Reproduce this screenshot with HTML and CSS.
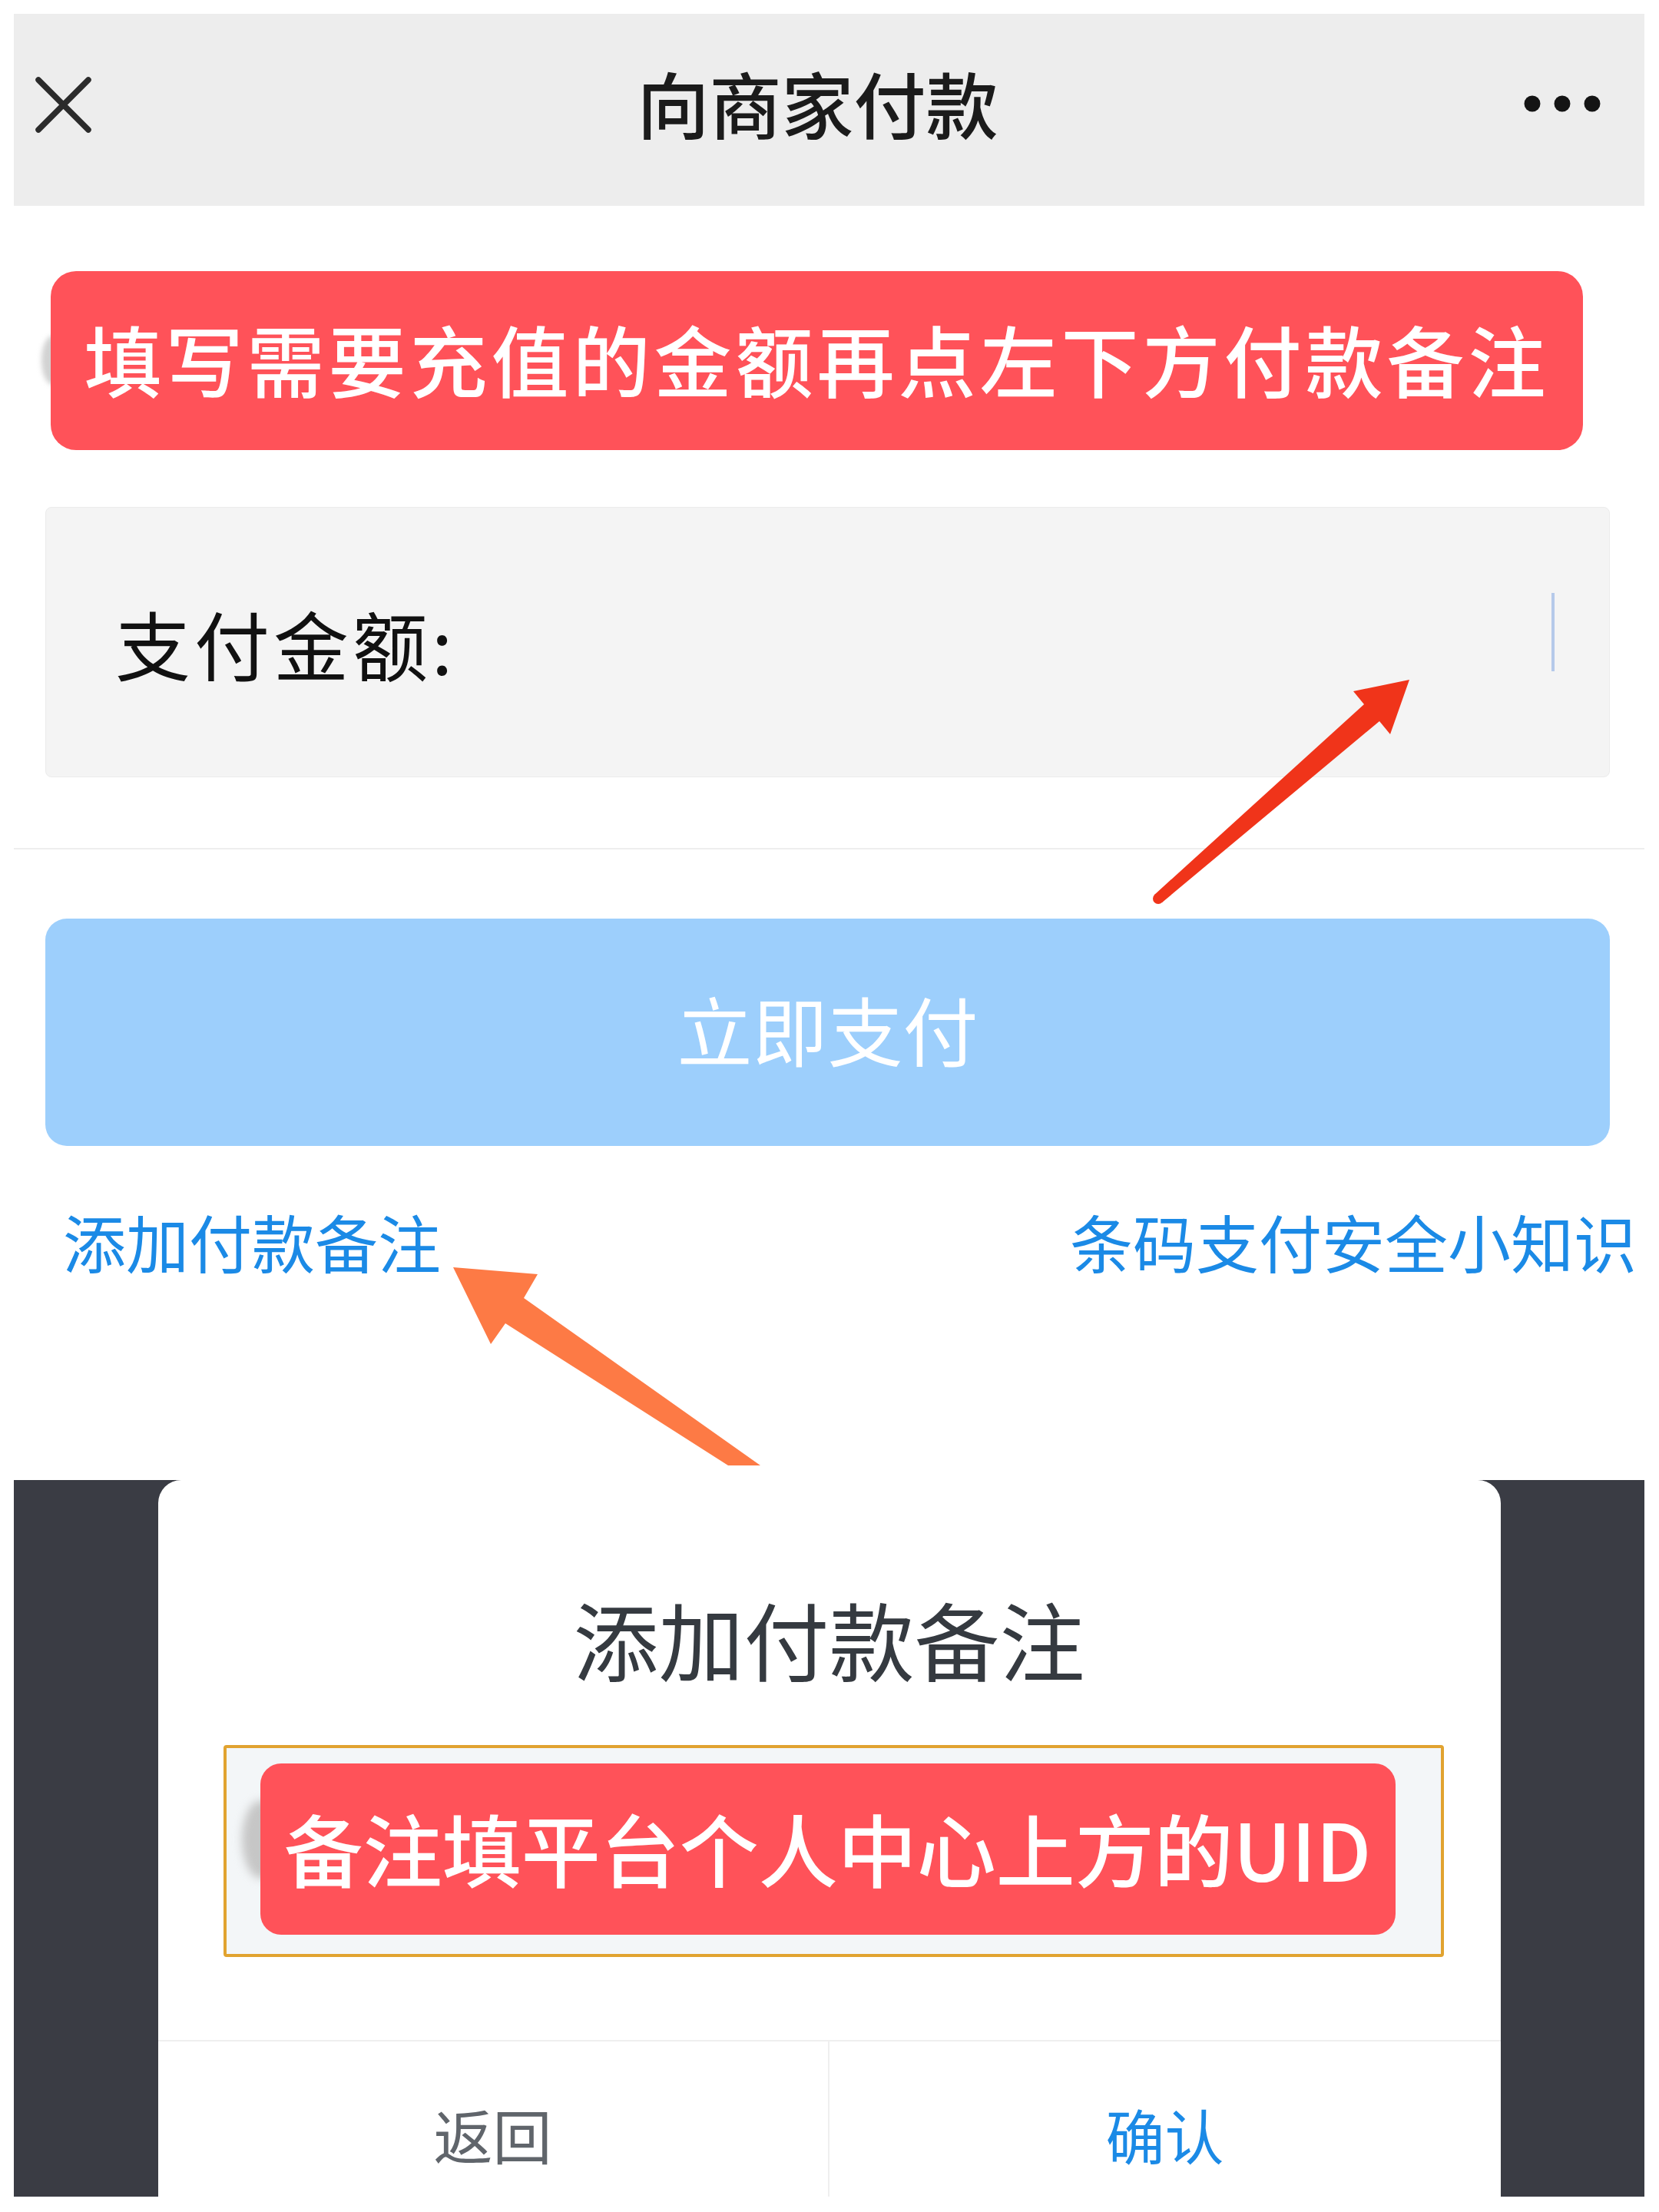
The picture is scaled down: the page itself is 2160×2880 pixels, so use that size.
FILE: index.html
```html
<!DOCTYPE html>
<html lang="zh-CN">
<head>
<meta charset="utf-8">
<title>向商家付款</title>
<link rel="stylesheet" href="styles.css">
</head>
<body>
<div class="screen">
  <header class="topbar">
    <svg class="icon-close" width="75" height="75" viewBox="0 0 75 75" aria-hidden="true">
      <path d="M5 5 L70 70 M70 5 L5 70" />
    </svg>
    <h1 class="title">向商家付款</h1>
    <svg class="icon-more" width="100" height="22" viewBox="0 0 100 22" aria-hidden="true">
      <circle cx="11" cy="11" r="10.5" />
      <circle cx="50" cy="11" r="10.5" />
      <circle cx="89" cy="11" r="10.5" />
    </svg>
  </header>

  <div class="notice">填写需要充值的金额再点左下方付款备注</div>

  <div class="amount">
    <span class="amount-label">支付金额:</span>
    <span class="caret"></span>
  </div>

  <div class="divider"></div>

  <div class="pay">立即支付</div>

  <div class="links">
    <span>添加付款备注</span>
    <span>条码支付安全小知识</span>
  </div>

  <div class="mask">
    <div class="dialog">
      <div class="dialog-title">添加付款备注</div>
      <div class="remark-box">
        <div class="remark">备注填平台个人中心上方的UID</div>
      </div>
      <div class="actions">
        <div class="act act-back">返回</div>
        <div class="act act-ok">确认</div>
      </div>
    </div>
  </div>

  <svg class="arrows" viewBox="18 18 2123 2842" aria-hidden="true">
    <polygon class="arrow-red" points="1503,1165 1776,917 1762,900 1835,885 1810,956 1796,939 1513,1175" />
    <circle class="arrow-red" cx="1508" cy="1170" r="7" />
    <polygon class="arrow-orange" points="590,1650 700,1659 682,1690 990,1908 948,1908 658,1723 639,1750" />
  </svg>
</div>
</body>
</html>
```

FILE: styles.css
```css
html, body {
  margin: 0;
  padding: 0;
  background: #ffffff;
}

body {
  font-family: "Noto Sans CJK SC", "Noto Sans", sans-serif;
}

.screen {
  position: relative;
  z-index: 0;
  margin: 18px 19px 0 18px;
  height: 2842px;
  overflow: hidden;
  background: #ffffff;
  display: flex;
  flex-direction: column;
}

/* top bar */
.topbar {
  flex: none;
  height: 250px;
  box-sizing: border-box;
  background: #ededed;
  display: grid;
  grid-template-columns: 1fr auto 1fr;
  align-items: center;
  padding: 0 57px 20px 27px;
}

.icon-close {
  justify-self: start;
  display: block;
  margin-top: 6px;
}

.icon-close path {
  fill: none;
  stroke: #2b2b2b;
  stroke-width: 7.5;
  stroke-linecap: round;
}

.title {
  margin: 0;
  font-size: 94px;
  line-height: 1;
  font-weight: 500;
  color: #1b1b1b;
}

.icon-more {
  justify-self: end;
  display: block;
  margin-top: 4px;
}

.icon-more circle {
  fill: #141414;
}

/* red notice */
.notice {
  position: relative;
  flex: none;
  margin: 85px 80px 0 48px;
  height: 233px;
  box-sizing: border-box;
  padding-bottom: 6px;
  border-radius: 33px;
  background: #ff5259;
  color: #ffffff;
  font-size: 101px;
  font-weight: 500;
  letter-spacing: 5px;
  line-height: 1;
  display: flex;
  align-items: center;
  justify-content: center;
  white-space: nowrap;
}

.notice::before {
  content: "";
  position: absolute;
  left: -12px;
  top: 84px;
  width: 30px;
  height: 64px;
  border-radius: 50%;
  background: #d2d2d2;
  filter: blur(3px);
  z-index: -1;
}

/* amount field */
.amount {
  flex: none;
  margin: 74px 45px 0 41px;
  height: 352px;
  box-sizing: border-box;
  background: #f4f4f4;
  border: 1px solid #ebebeb;
  border-radius: 8px;
  display: flex;
  align-items: center;
  padding: 0 71px 0 90px;
}

.amount-label {
  font-size: 98px;
  line-height: 1;
  letter-spacing: 5px;
  color: #111111;
}

.caret {
  margin-left: auto;
  margin-bottom: 26px;
  width: 4px;
  height: 102px;
  background: #b5c9ea;
}

.divider {
  flex: none;
  margin-top: 92px;
  height: 2px;
  background: #eeeeee;
}

/* pay button */
.pay {
  flex: none;
  margin: 90px 45px 0 41px;
  height: 296px;
  box-sizing: border-box;
  padding-bottom: 12px;
  border-radius: 28px;
  background: #9dcffc;
  color: #ffffff;
  font-size: 98px;
  line-height: 1;
  display: flex;
  align-items: center;
  justify-content: center;
}

/* links */
.links {
  flex: none;
  margin-top: 74px;
  display: flex;
  justify-content: space-between;
  padding: 0 10px 0 64px;
  font-size: 82px;
  line-height: 100px;
  color: #1b8ae6;
  white-space: nowrap;
}

/* dark mask and dialog */
.mask {
  flex: 1;
  margin-top: 261px;
  background: #3a3c44;
  display: flex;
  justify-content: center;
  align-items: flex-start;
  overflow: hidden;
}

.dialog {
  flex: none;
  width: 1748px;
  height: 1000px;
  background: #ffffff;
  border-radius: 30px 30px 0 0;
  display: flex;
  flex-direction: column;
}

.dialog-title {
  padding-top: 141px;
  text-align: center;
  font-size: 111px;
  line-height: 130px;
  color: #353a40;
}

.remark-box {
  isolation: isolate;
  margin: 74px 74px 0 85px;
  border: 4px solid #e1a330;
  border-radius: 4px;
  background: #f3f6f8;
  padding: 20px 59px 25px 44px;
}

.remark {
  position: relative;
  height: 223px;
  box-sizing: border-box;
  padding-bottom: 4px;
  border-radius: 27px;
  background: #ff5259;
  color: #ffffff;
  font-size: 103px;
  font-weight: 500;
  line-height: 1;
  display: flex;
  align-items: center;
  justify-content: center;
  white-space: nowrap;
}

.remark::before {
  content: "";
  position: absolute;
  left: -24px;
  top: 48px;
  width: 50px;
  height: 102px;
  border-radius: 50%;
  background: #c6c6c6;
  filter: blur(6px);
  z-index: -1;
}

.actions {
  margin-top: 108px;
  border-top: 2px solid #efefef;
  display: grid;
  grid-template-columns: 1fr 1fr;
  height: 240px;
}

.act {
  display: flex;
  align-items: center;
  justify-content: center;
  font-size: 77px;
  line-height: 1;
}

.act-back {
  color: #60656b;
  border-right: 2px solid #efefef;
}

.act-ok {
  color: #1b8ae6;
}

/* annotation arrows */
.arrows {
  position: absolute;
  left: 0;
  top: 0;
  width: 2123px;
  height: 2842px;
  z-index: 2;
  pointer-events: none;
}

.arrow-red {
  fill: #f0341a;
}

.arrow-orange {
  fill: #fd7a45;
}
```
